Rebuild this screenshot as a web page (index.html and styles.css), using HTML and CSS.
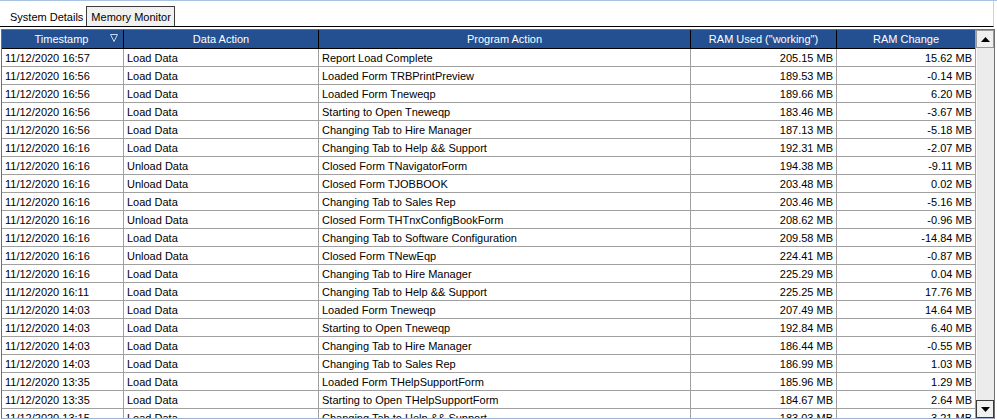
FILE: index.html
```html
<!DOCTYPE html>
<html>
<head>
<meta charset="utf-8">
<link rel="stylesheet" href="styles.css">
</head>
<body>
<div class="window">
  <div class="tabstrip">
    <div class="tab">System Details</div>
    <div class="tab active">Memory Monitor</div>
  </div>
  <div class="gridwrap">
    <div class="grid">
      <div class="row head">
        <div class="cell hc ts">Timestamp<svg class="filter" width="8" height="8" viewBox="0 0 8 8"><path d="M0.5 0.5 H7.5 L4 7.5 Z" fill="none" stroke="#c8d6ee" stroke-width="1"/></svg></div>
        <div class="cell hc">Data Action</div>
        <div class="cell hc">Program Action</div>
        <div class="cell hc">RAM Used ("working")</div>
        <div class="cell hc">RAM Change</div>
      </div>
      <div class="row"><div class="cell">11/12/2020 16:57</div><div class="cell">Load Data</div><div class="cell">Report Load Complete</div><div class="cell num">205.15 MB</div><div class="cell num">15.62 MB</div></div>
      <div class="row"><div class="cell">11/12/2020 16:56</div><div class="cell">Load Data</div><div class="cell">Loaded Form TRBPrintPreview</div><div class="cell num">189.53 MB</div><div class="cell num">-0.14 MB</div></div>
      <div class="row"><div class="cell">11/12/2020 16:56</div><div class="cell">Load Data</div><div class="cell">Loaded Form Tneweqp</div><div class="cell num">189.66 MB</div><div class="cell num">6.20 MB</div></div>
      <div class="row"><div class="cell">11/12/2020 16:56</div><div class="cell">Load Data</div><div class="cell">Starting to Open Tneweqp</div><div class="cell num">183.46 MB</div><div class="cell num">-3.67 MB</div></div>
      <div class="row"><div class="cell">11/12/2020 16:56</div><div class="cell">Load Data</div><div class="cell">Changing Tab to Hire Manager</div><div class="cell num">187.13 MB</div><div class="cell num">-5.18 MB</div></div>
      <div class="row"><div class="cell">11/12/2020 16:16</div><div class="cell">Load Data</div><div class="cell">Changing Tab to Help &amp;&amp; Support</div><div class="cell num">192.31 MB</div><div class="cell num">-2.07 MB</div></div>
      <div class="row"><div class="cell">11/12/2020 16:16</div><div class="cell">Unload Data</div><div class="cell">Closed Form TNavigatorForm</div><div class="cell num">194.38 MB</div><div class="cell num">-9.11 MB</div></div>
      <div class="row"><div class="cell">11/12/2020 16:16</div><div class="cell">Unload Data</div><div class="cell">Closed Form TJOBBOOK</div><div class="cell num">203.48 MB</div><div class="cell num">0.02 MB</div></div>
      <div class="row"><div class="cell">11/12/2020 16:16</div><div class="cell">Load Data</div><div class="cell">Changing Tab to Sales Rep</div><div class="cell num">203.46 MB</div><div class="cell num">-5.16 MB</div></div>
      <div class="row"><div class="cell">11/12/2020 16:16</div><div class="cell">Unload Data</div><div class="cell">Closed Form THTnxConfigBookForm</div><div class="cell num">208.62 MB</div><div class="cell num">-0.96 MB</div></div>
      <div class="row"><div class="cell">11/12/2020 16:16</div><div class="cell">Load Data</div><div class="cell">Changing Tab to Software Configuration</div><div class="cell num">209.58 MB</div><div class="cell num">-14.84 MB</div></div>
      <div class="row"><div class="cell">11/12/2020 16:16</div><div class="cell">Unload Data</div><div class="cell">Closed Form TNewEqp</div><div class="cell num">224.41 MB</div><div class="cell num">-0.87 MB</div></div>
      <div class="row"><div class="cell">11/12/2020 16:16</div><div class="cell">Load Data</div><div class="cell">Changing Tab to Hire Manager</div><div class="cell num">225.29 MB</div><div class="cell num">0.04 MB</div></div>
      <div class="row"><div class="cell">11/12/2020 16:11</div><div class="cell">Load Data</div><div class="cell">Changing Tab to Help &amp;&amp; Support</div><div class="cell num">225.25 MB</div><div class="cell num">17.76 MB</div></div>
      <div class="row"><div class="cell">11/12/2020 14:03</div><div class="cell">Load Data</div><div class="cell">Loaded Form Tneweqp</div><div class="cell num">207.49 MB</div><div class="cell num">14.64 MB</div></div>
      <div class="row"><div class="cell">11/12/2020 14:03</div><div class="cell">Load Data</div><div class="cell">Starting to Open Tneweqp</div><div class="cell num">192.84 MB</div><div class="cell num">6.40 MB</div></div>
      <div class="row"><div class="cell">11/12/2020 14:03</div><div class="cell">Load Data</div><div class="cell">Changing Tab to Hire Manager</div><div class="cell num">186.44 MB</div><div class="cell num">-0.55 MB</div></div>
      <div class="row"><div class="cell">11/12/2020 14:03</div><div class="cell">Load Data</div><div class="cell">Changing Tab to Sales Rep</div><div class="cell num">186.99 MB</div><div class="cell num">1.03 MB</div></div>
      <div class="row"><div class="cell">11/12/2020 13:35</div><div class="cell">Load Data</div><div class="cell">Loaded Form THelpSupportForm</div><div class="cell num">185.96 MB</div><div class="cell num">1.29 MB</div></div>
      <div class="row"><div class="cell">11/12/2020 13:35</div><div class="cell">Load Data</div><div class="cell">Starting to Open THelpSupportForm</div><div class="cell num">184.67 MB</div><div class="cell num">2.64 MB</div></div>
      <div class="row"><div class="cell">11/12/2020 13:15</div><div class="cell">Load Data</div><div class="cell">Changing Tab to Help &amp;&amp; Support</div><div class="cell num">183.03 MB</div><div class="cell num">3.21 MB</div></div>
    </div>
    <div class="scrollbar">
      <div class="sbtn up"><svg width="9" height="5" viewBox="0 0 9 5"><path d="M0 5 L4.5 0 L9 5 Z" fill="#000"/></svg></div>
      <div class="track"></div>
      <div class="sbtn down"><svg width="9" height="5" viewBox="0 0 9 5"><path d="M0 0 L9 0 L4.5 5 Z" fill="#000"/></svg></div>
    </div>
  </div>
</div>
</body>
</html>
```

FILE: styles.css
```css
html, body {
  margin: 0;
  padding: 0;
  background: #ffffff;
  overflow: hidden;
}
body {
  width: 997px;
  height: 420px;
  font-family: "Liberation Sans", Arial, sans-serif;
  font-size: 11px;
  color: #000;
}
.window {
  border-top: 1px solid #a9c3e2;
  height: 419px;
  display: flex;
  flex-direction: column;
}
.tabstrip {
  width: 994px;
  height: 26px;
  box-sizing: border-box;
  display: flex;
  align-items: flex-end;
  padding-left: 3px;
  border-bottom: 1px solid #000;
  border-right: 1px solid #c6d2e2;
}
.tab {
  line-height: 18px;
  padding: 1px 3px 0 7px;
  color: #000;
  white-space: nowrap;
}
.tab.active {
  padding: 1px 3px 0 4px;
  background: #f0f0f0;
  border: 1px solid #3c3c3c;
  border-bottom: none;
}
.gridwrap {
  margin-top: 2px;
  margin-left: 1px;
  width: 992px;
  height: 388px;
  display: flex;
  border: 1px solid #6f6f6f;
  border-bottom-color: #9fb3cc;
}
.grid {
  width: 974px;
  flex: none;
  overflow: hidden;
  background: #fff;
}
.row {
  display: grid;
  grid-template-columns: 122px 195px 372px 146px 139px;
  height: 18px;
}
.cell {
  box-sizing: border-box;
  border-right: 1px solid #a0a0a0;
  border-bottom: 1px solid #a0a0a0;
  padding: 1px 3px 0;
  line-height: 16px;
  white-space: nowrap;
  overflow: hidden;
}
.num {
  text-align: right;
}
.row.head {
  height: 19px;
}
.hc {
  background: #245091;
  color: #fff;
  text-align: center;
  line-height: 17px;
  border-right-color: #000;
  border-bottom-color: #000;
}
.ts {
  position: relative;
  padding-right: 5px;
}
.filter {
  position: absolute;
  right: 5px;
  top: 4px;
}
.scrollbar {
  width: 18px;
  flex: none;
  display: flex;
  flex-direction: column;
  background: #ececec;
  border-left: 1px solid #a0a0a0;
  margin-left: -1px;
}
.sbtn {
  height: 18px;
  box-sizing: border-box;
  background: #f0f0f0;
  border: 1px solid #9a9a9a;
  display: flex;
  align-items: center;
  justify-content: center;
}
.sbtn.down {
  border-color: #3a3a3a;
}
.track {
  flex: 1;
  background: #ececec;
  border-left: 1px solid #fafafa;
}
```
